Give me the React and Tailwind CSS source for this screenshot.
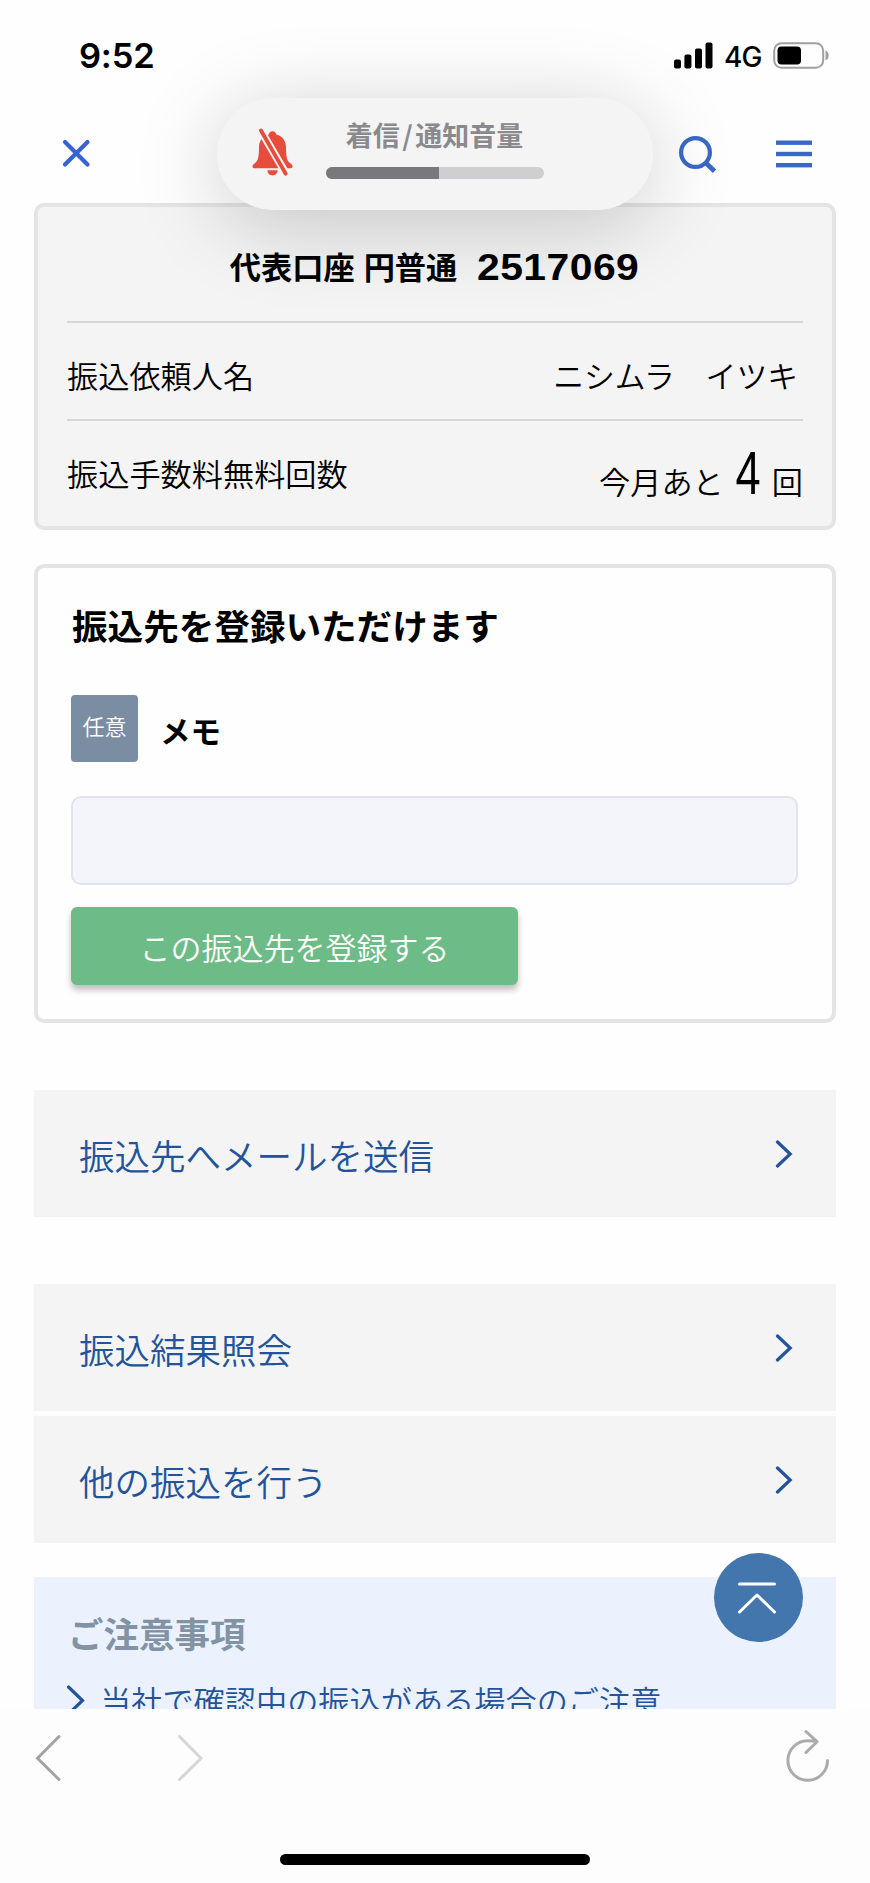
import React, { useState } from "react";

const pageLinks = [
	{ id: "mail", label: "振込先へメールを送信", className: "mt-[67px]" },
	{ id: "result", label: "振込結果照会", className: "mt-[67px]" },
	{ id: "other", label: "他の振込を行う", className: "mt-[5px]" },
];

const StatusBar = () => (
	<div className="h-[98px] flex justify-between pl-[79px] pr-[41px] pt-[36px]">
		<span className="font-['Inter'] font-semibold text-[34.500px] leading-[40px] tracking-[-0.2px] text-black">9:52</span>
		<div className="flex h-[38px] items-center text-black">
			<svg width="39" height="27" viewBox="0 0 39 27" fill="currentColor">
				<rect x="0" y="17.5" width="7" height="9" rx="2" />
				<rect x="10.4" y="12.5" width="7" height="14" rx="2" />
				<rect x="21" y="6.5" width="7" height="20" rx="2" />
				<rect x="31.5" y="0.5" width="7" height="26" rx="2" />
			</svg>
			<span className="ml-[11px] mt-[3px] w-[39px] font-['Inter'] font-medium text-[28px] leading-none tracking-[-0.8px]">4G</span>
			<svg className="ml-[10px]" width="56" height="27" viewBox="0 0 56 27">
				<rect x="1.2" y="1.2" width="49" height="24.6" rx="7.5" fill="none" stroke="#a0a0a0" strokeWidth="2" />
				<rect x="4.5" y="4.5" width="23.5" height="18" rx="4" fill="#000" />
				<path d="M52.5 8.5c2 .8 3.2 2.600 3.200 5s-1.200 4.200-3.200 5z" fill="#a0a0a0" />
			</svg>
		</div>
	</div>
);

const Header = () => (
	<header className="h-[105px] flex items-start pl-[62px] pr-[58px] pt-[38px]">
		<button type="button" aria-label="閉じる">
			<svg width="30" height="34" viewBox="0 0 30 34" fill="none" stroke="#3563d2" strokeWidth="4.2" strokeLinecap="round">
				<path d="M3 6 25.5 28.5M25.5 6 3 28.5" />
			</svg>
		</button>
		<button type="button" aria-label="検索" className="ml-auto">
			<svg width="40" height="40" viewBox="0 0 40 40" fill="none" stroke="#3a69c4" strokeWidth="4.2">
				<circle cx="17.5" cy="16.5" r="14.4" />
				<path d="M27 26 36.5 35.3" strokeWidth="4.8" />
			</svg>
		</button>
		<button type="button" aria-label="メニュー" className="ml-[58px]">
			<svg width="36" height="34" viewBox="0 0 36 34" fill="#3a69c4">
				<rect y="4.5" width="36" height="4.4" />
				<rect y="15.8" width="36" height="4.4" />
				<rect y="27" width="36" height="4.4" />
			</svg>
		</button>
	</header>
);

const VolumeToast = () => (
	<div className="absolute left-[217px] top-[98px] w-[436px] h-[112px] rounded-full bg-[#f4f4f4] flex shadow-[0_14px_88px_rgba(0,0,0,0.2)]">
		<svg className="ml-[34px] mt-[30px]" width="42" height="50" viewBox="0 0 42 50">
			<g fill="#e64d3d">
				<path d="M21.5 3.3c-2.3 0-3.4 1.4-3.7 3.3C11.3 8.3 8 13 8 19.5c0 7.5-.8 12.5-2.8 14.500-2.200 2.200-3.700 2.500-3.700 4.500 0 1 .6 1.700 1.800 1.700h36.400c1.200 0 1.800-.7 1.800-1.700 0-2-1.500-2.300-3.700-4.500-2-2-2.800-7-2.800-14.500 0-6.500-3.300-11.200-9.800-12.900-.3-1.900-1.400-3.300-3.700-3.300z" />
				<path d="M16.3 42.300h10.400c-.4 3.400-2.400 5.200-5.200 5.200s-4.800-1.800-5.200-5.200z" />
			</g>
			<path d="M9.5 2 35.5 46.5" stroke="#f4f4f4" strokeWidth="7.6" />
			<path d="M10 2.5 34.7 45.7" stroke="#e64d3d" strokeWidth="3.8" strokeLinecap="round" />
		</svg>
		<div className="ml-[33px]">
			<p className="mt-[23px] w-[217px] text-center text-[27px] leading-[28px] font-bold text-[#8a8a8e] whitespace-nowrap">
				着信<span className="mx-[2.500px] inline-block">/</span>通知音量
			</p>
			<div className="mt-[18px] w-[218px] h-3 rounded-full bg-[#cfcfd1] overflow-hidden">
				<div className="h-full bg-[#79797d]" style={{ width: "52%" }} />
			</div>
		</div>
	</div>
);

const AccountCard = () => (
	<section className="h-[327px] rounded-[10px] border-4 border-[#e4e4e4] bg-[#f4f4f4] px-[29px] text-black">
		<h1 className="h-[116px] flex items-center justify-center border-b-2 border-[#d6d6d6] pt-[3px] text-[31.200px] leading-none font-bold">
			<span className="[word-spacing:2px]">代表口座 円普通</span>
			<span className="ml-[20px] mt-[5px] mr-[18px] origin-left scale-x-[1.12] font-['Liberation_Sans'] text-[36.500px] tracking-[0.400px]">2517069</span>
		</h1>
		<div className="h-[98px] flex items-center justify-between border-b-2 border-[#d6d6d6] pt-[8px] text-[31.200px] font-[350]">
			<span>振込依頼人名</span>
			<span className="mr-[5px] text-[30.800px]">ニシムラ　イツキ</span>
		</div>
		<div className="flex justify-between text-[31.200px] font-[350] leading-[40px]">
			<span className="pt-[32px]">振込手数料無料回数</span>
			<span className="flex pt-[40px]">
				<span>今月あと</span>
				<span className="-mt-[16px] w-[48px] text-center font-['Liberation_Sans'] font-normal text-[61px] leading-[56px] scale-x-[0.740]">4</span>
				<span>回</span>
			</span>
		</div>
	</section>
);

const MemoCard = () => {
	const [memo, setMemo] = useState("");

	return (
		<section className="mt-[34px] h-[459px] rounded-[10px] border-4 border-[#e4e4e4] pl-[33px] pr-[34px]">
			<h2 className="mt-[37px] pl-px text-[35.600px] leading-[40px] font-bold text-black">振込先を登録いただけます</h2>
			<div className="mt-[50px] flex h-[67px]">
				<span className="size-[67px] rounded bg-[#7b8da2] text-center text-[22px] leading-[61px] font-[350] text-white">任意</span>
				<label htmlFor="memo" className="ml-[22px] text-[30.500px] leading-[70px] font-bold text-black">
					メモ
				</label>
			</div>
			<input
				id="memo"
				type="text"
				value={memo}
				onChange={(e) => setMemo(e.target.value)}
				className="mt-[34px] block h-[89px] w-full rounded-[10px] border-2 border-[#e1e4ef] bg-[#f4f5fb] px-4 text-[31px]"
			/>
			<button
				type="button"
				className="mt-[22px] block h-[78px] w-[447px] rounded-md bg-[#6dbb87] text-[31px] leading-[77px] font-[350] text-white shadow-[0_5px_6px_rgba(0,0,0,0.25)]"
			>
				この振込先を登録する
			</button>
		</section>
	);
};

const LinkRow = ({ label, className }) => (
	<a href="#" className={`${className} h-[127px] flex items-center justify-between bg-[#f4f4f4] pl-[45px] pr-[43px] text-[35.500px] font-[350] text-[#23549a]`}>
		<span className="pt-[3px]">{label}</span>
		<svg className="mb-[-1px]" width="18" height="28" viewBox="0 0 18 28" fill="none" stroke="currentColor" strokeWidth="3.2" strokeLinecap="round">
			<path d="M2.500 2 15.200 14 2.500 26" />
		</svg>
	</a>
);

const BrowserBar = () => (
	<footer className="h-[174px] bg-[#fdfdfd]">
		<div className="flex items-start pl-[34px] pr-[39px] pt-[20px]">
			<svg className="mt-[4px]" width="28" height="50" viewBox="0 0 28 50" fill="none" stroke="#a3a3a3" strokeWidth="3" strokeLinecap="round">
				<path d="M25 3.500 3.500 25.300 25 46.500" />
			</svg>
			<svg className="ml-[114px] mt-[4px]" width="28" height="50" viewBox="0 0 28 50" fill="none" stroke="#d6d6d6" strokeWidth="3" strokeLinecap="round">
				<path d="M3.500 3.500 25 25.300 3.500 46.500" />
			</svg>
			<svg className="ml-auto" width="46" height="54" viewBox="0 0 46 54" fill="none" stroke="#ababab" strokeWidth="3" strokeLinecap="round" strokeLinejoin="round">
				<path d="M42.500 31.500A19.800 19.800 0 1 1 22.700 11.700C26 11.700 29 12 32 12.700M21 2.500 32 12.700 21 23.500" />
			</svg>
		</div>
		<div className="mx-auto mt-[71px] h-[11px] w-[310px] rounded-full bg-black" />
	</footer>
);

const App = () => {
	return (
		<div className="relative w-[870px] h-[1883px] overflow-hidden bg-[#fefefe] font-['Noto_Sans_CJK_JP',sans-serif]">
			<StatusBar />
			<Header />

			<main className="h-[1506px] overflow-hidden px-[34px]">
				<AccountCard />
				<MemoCard />
				{pageLinks.map((link) => (
					<LinkRow key={link.id} label={link.label} className={link.className} />
				))}

				{/* Notice */}
				<section className="mt-[34px] h-[200px] bg-[#ebf2fd] px-[33px] pt-[36px]">
					<h2 className="pl-px text-[35.500px] leading-[40px] font-bold text-[#8293a6]">ご注意事項</h2>
					<a href="#" className="mt-[27px] flex text-[31.200px] leading-[40px] font-[350] text-[#23549a]">
						<svg className="mt-[5px]" width="18" height="31" viewBox="0 0 18 31" fill="none" stroke="currentColor" strokeWidth="3.2" strokeLinecap="round">
							<path d="M1.500 2 15.500 15.500 1.500 29" />
						</svg>
						<span className="ml-[15px]">当社で確認中の振込がある場合のご注意</span>
					</a>
				</section>
			</main>

			<BrowserBar />

			{/* Back to top */}
			<button type="button" aria-label="ページの先頭へ" className="absolute left-[714px] top-[1553px] size-[89px] rounded-full bg-[#4476ae] flex items-center justify-center">
				<svg className="mr-[3px]" width="40" height="34" viewBox="0 0 40 34" fill="none" stroke="#fff" strokeWidth="3" strokeLinecap="round" strokeLinejoin="round">
					<path d="M2.500 3h35M2.500 31 20 14 37.500 31" />
				</svg>
			</button>

			<VolumeToast />
		</div>
	);
};

export default App;
